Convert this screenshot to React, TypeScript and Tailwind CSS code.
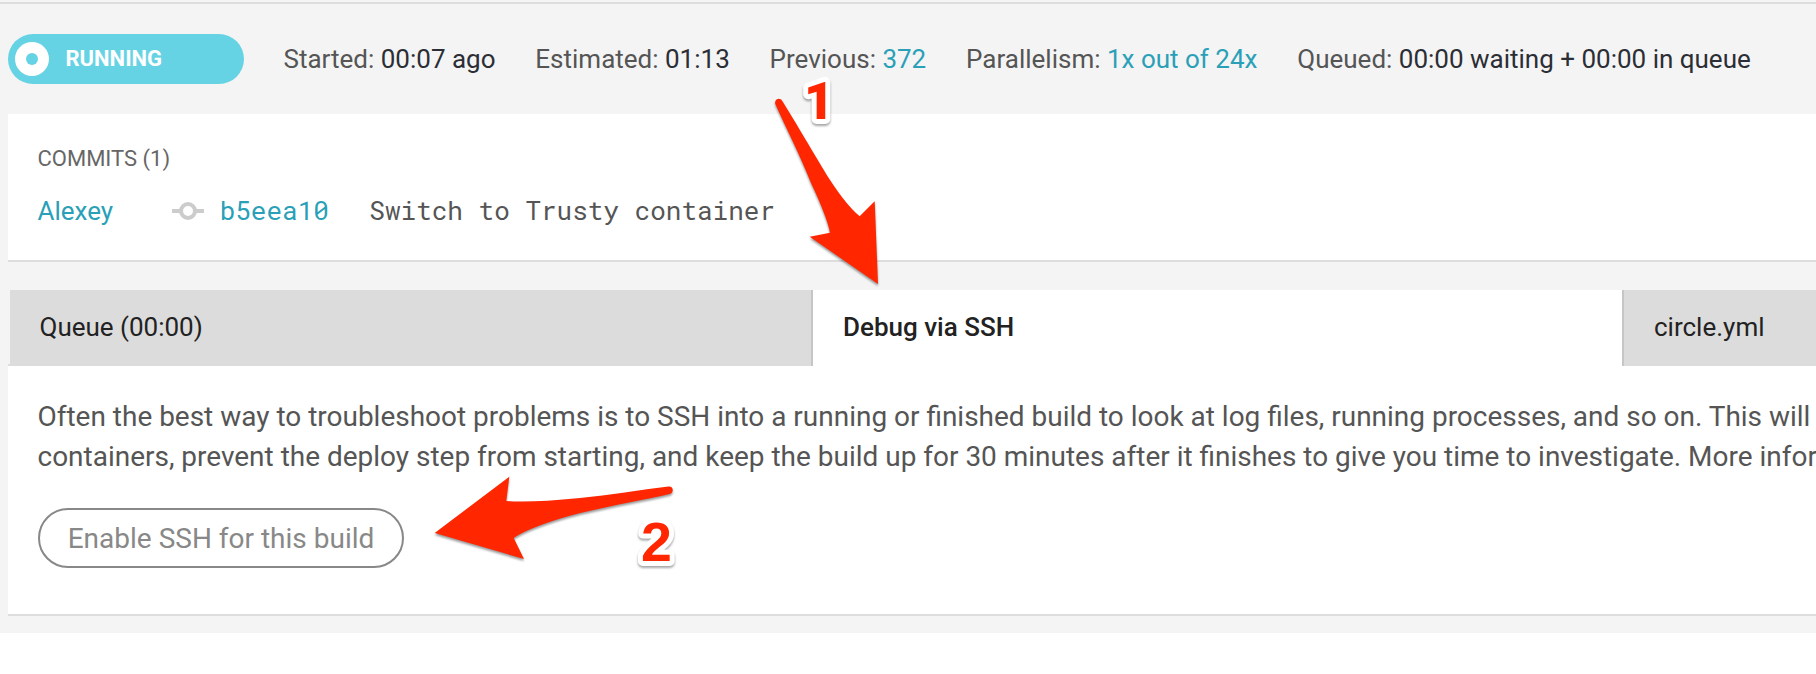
import type { ReactNode } from "react";

function Stat({ label, children, link = false }: { label: string; children: ReactNode; link?: boolean }) {
  return (
    <div className="whitespace-nowrap text-[#555]">
      {label}: <span className={link ? "text-[#2aa0b8]" : "text-[#2b2e34]"}>{children}</span>
    </div>
  );
}

function StatusBadge() {
  return (
    <div className="mr-[39.5px] flex h-[50px] w-[236px] shrink-0 items-center rounded-full bg-[#66d3e4] pl-[7px]">
      <div className="flex size-[34px] items-center justify-center rounded-full bg-white">
        <div className="size-3 rounded-full bg-[#66d3e4]" />
      </div>
      <span className="ml-[16.5px] text-[22px] leading-none font-bold text-white">RUNNING</span>
    </div>
  );
}

function CommitIcon() {
  return (
    <svg className="mr-[16px] ml-[58.5px] h-[20px] w-[32px] shrink-0" viewBox="0 0 32 20" fill="none" stroke="#ccc" strokeWidth="4">
      <path d="M0 10h8M24 10h8" />
      <circle cx="16" cy="10" r="7" />
    </svg>
  );
}

function Annotations() {
  return (
    <svg
      className="pointer-events-none absolute inset-0 h-[674px] w-[1816px]"
      viewBox="0 0 1816 674"
      fill="#ff2600"
    >
      <g className="drop-shadow-[0_2px_1px_rgba(0,0,0,0.4)]">
        <path d="M775.3 104C774 99 780 97 782.3 101C795 121 815 156 830 180Q847 206 859.7 216.3L874.7 201.3L878 284L809.7 236.7L830 232.7Q827 217 811 183C800 155 785 126 775.3 104Z" />
        <path d="M668.5 486.5C674 486 674 493 669.5 494C640 501 585 510 554 520.5Q525 530 513.7 538L524 559L434.7 533L509.3 476.7L506.3 501Q530 503 580 498C610 495 640 490 668.5 486.5Z" />
      </g>
      <g
        className="font-bold drop-shadow-[0_2px_1px_rgba(0,0,0,0.35)] [paint-order:stroke_fill]"
        stroke="white"
        strokeWidth="10"
        strokeLinejoin="round"
      >
        <text x="804" y="119.3" className="text-[52px] font-black">1</text>
        <text x="641" y="561.3" className="font-['Liberation_Sans',sans-serif] text-[55.5px]">2</text>
      </g>
    </svg>
  );
}

export default function App() {
  return (
    <div className="relative h-[674px] w-[1816px] overflow-hidden bg-white font-[Roboto,sans-serif] text-[26px] leading-[30px]">
      <main className="h-[633px] bg-[#f4f4f4] pt-[2px]">
        <header className="flex h-[112px] items-start border-t-2 border-[#ddd] pt-[30px] pl-2">
          <StatusBadge />
          <div className="flex h-[50px] items-center gap-[39.8px]">
            <Stat label="Started">00:07 ago</Stat>
            <Stat label="Estimated">01:13</Stat>
            <Stat label="Previous" link>372</Stat>
            <Stat label="Parallelism" link>1x out of 24x</Stat>
            <Stat label="Queued">00:00 waiting + 00:00 in queue</Stat>
          </div>
        </header>

        <section className="ml-2 h-[148px] border-b-2 border-[#ddd] bg-white pt-[31px] pl-[29.5px]">
          <h2 className="text-[22px] leading-[28px] text-[#666]">COMMITS (1)</h2>
          <div className="mt-[23px] flex items-center text-[#555]">
            <a className="text-[#2aa0b8]">Alexey</a>
            <CommitIcon />
            <div className="-mt-[2px] flex gap-[40.5px] font-['Roboto_Mono','Liberation_Mono',monospace] whitespace-pre">
              <a className="text-[#2aa0b8]">b5eea10</a>
              <span>Switch to Trusty container</span>
            </div>
          </div>
        </section>

        <nav className="mt-[28px] ml-2 flex h-[76px] text-[#222]">
          <div className="flex w-[805px] shrink-0 border-b-2 border-[#ddd] pl-[2px]">
            <div className="-mb-[2px] flex flex-1 items-center border-r-2 border-[#c6c6c6] bg-[#dcdcdc] pb-[2px] pl-[29.5px]">
              Queue (00:00)
            </div>
          </div>
          <div className="flex w-[809px] shrink-0 items-center bg-white pb-[2px] pl-[30px] font-medium">Debug via SSH</div>
          <div className="flex flex-1 items-center border-l-2 border-[#c6c6c6] bg-[#dcdcdc] pb-[2px] pl-[30px]">circle.yml</div>
        </nav>

        <section className="ml-2 h-[250px] overflow-hidden border-b-2 border-[#ddd] bg-white pt-[31px] pl-[30px]">
          <p className="-ml-[0.5px] text-[27.98px] leading-[40px] whitespace-nowrap text-[#555]">
            Often the best way to troubleshoot problems is to SSH into a running or finished build to look at log files, running processes, and so on. This will
            <br />
            containers, prevent the deploy step from starting, and keep the build up for 30 minutes after it finishes to give you time to investigate. More infor
          </p>
          <button className="mt-[31px] h-[60px] w-[366px] rounded-full border-2 border-[#888] pt-[2px] text-[28px] leading-none text-[#888]">
            Enable SSH for this build
          </button>
        </section>
      </main>
      <Annotations />
    </div>
  );
}
